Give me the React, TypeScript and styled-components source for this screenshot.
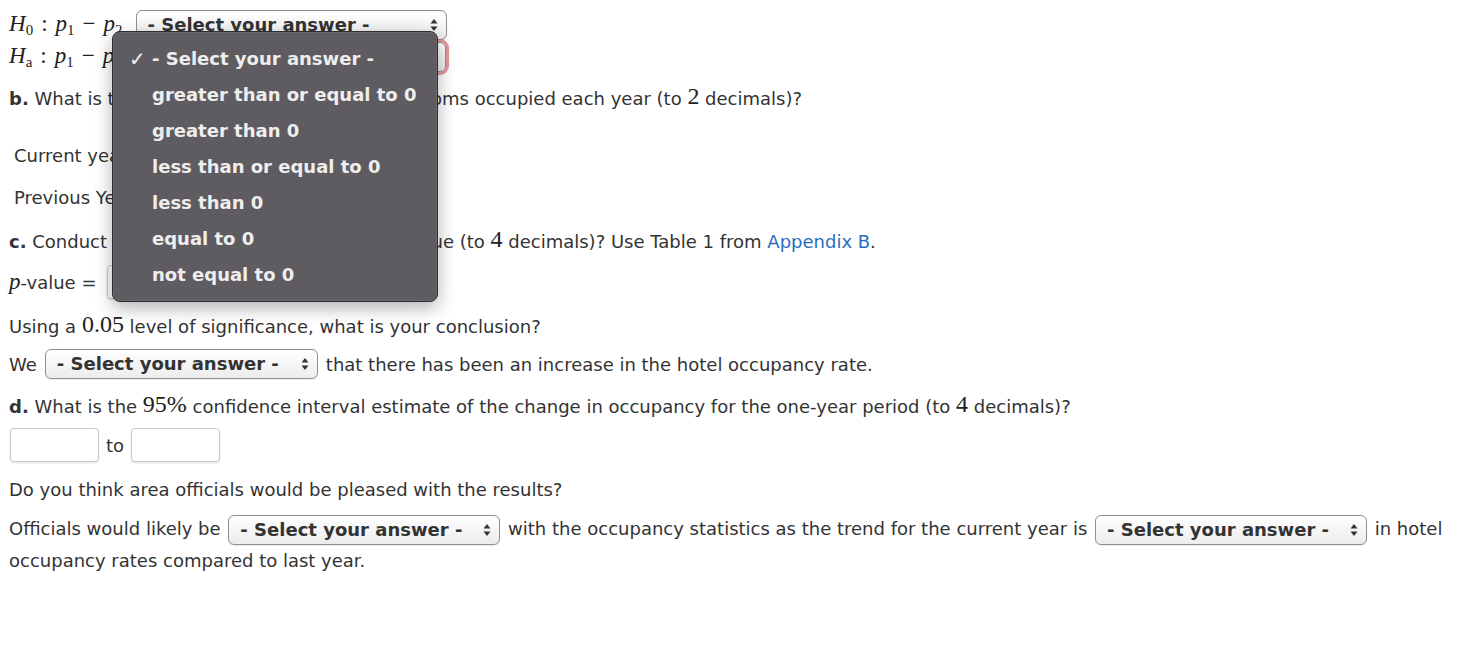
import React from "react";
import styled, { createGlobalStyle } from "styled-components";

const Global = createGlobalStyle`
  body {
    margin: 0;
    background: #ffffff;
    color: #333333;
    font-family: "DejaVu Sans", Verdana, sans-serif;
    font-size: 18px;
  }
`;

const Page = styled.div`
  position: relative;
  padding: 9px 0 0 9px;
  width: 1468px;
  height: 672px;
  box-sizing: border-box;
  overflow: hidden;
`;

const Row = styled.div<{ $h?: number; $mt?: number; $indent?: number; $gap?: number }>`
  display: flex;
  align-items: center;
  gap: ${(p) => p.$gap ?? 6}px;
  height: ${(p) => p.$h ?? 24}px;
  margin-top: ${(p) => p.$mt ?? 0}px;
  padding-left: ${(p) => p.$indent ?? 0}px;
  white-space: nowrap;
`;

const Para = styled.p`
  margin: 12px 0 0 0;
  line-height: 32px;
  width: 1445px;
`;

const MathText = styled.span`
  font-family: "Liberation Serif", "DejaVu Serif", serif;
  font-size: 23px;
  font-style: italic;
  color: #222;
`;

const Op = styled.span`
  font-style: normal;
  padding: 0 8px;
`;

const Sub = styled.sub`
  font-size: 15px;
  font-style: normal;
  vertical-align: -4px;
`;

const Num = styled.span`
  font-family: "Liberation Serif", "DejaVu Serif", serif;
  font-size: 24px;
  line-height: 20px;
  vertical-align: 1px;
  color: #222;
`;

const Bold = styled.b`
  font-weight: 700;
`;

const Link = styled.a`
  color: #2a6ebb;
  text-decoration: none;
`;

const SelectBox = styled.span<{ $w: number; $focus?: boolean }>`
  display: inline-flex;
  align-items: center;
  justify-content: space-between;
  vertical-align: middle;
  box-sizing: border-box;
  width: ${(p) => p.$w}px;
  height: 30px;
  margin: 0 2px;
  padding: 0 8px 0 11px;
  border: 1px solid #8f8f8f;
  border-radius: 6px;
  background: linear-gradient(#ffffff, #ececec);
  font-weight: 700;
  font-size: 18px;
  color: #333;
  line-height: 28px;
  white-space: nowrap;
  box-shadow: ${(p) =>
    p.$focus ? "0 0 0 3px rgba(214, 94, 100, 0.65)" : "0 1px 1px rgba(0,0,0,0.08)"};
`;

const TextInput = styled.span<{ $w?: number }>`
  display: inline-block;
  vertical-align: middle;
  box-sizing: border-box;
  width: ${(p) => p.$w ?? 89}px;
  height: 34px;
  border: 1px solid #c9c9c9;
  border-radius: 4px;
  background: #fff;
  box-shadow: 0 1px 2px rgba(0, 0, 0, 0.12);
`;

const Menu = styled.div`
  position: absolute;
  left: 112px;
  top: 31px;
  width: 326px;
  height: 271px;
  box-sizing: border-box;
  padding-top: 9px;
  background: #5f5c61;
  border: 1px solid #2e2d2f;
  border-radius: 8px;
  box-shadow: 0 6px 18px rgba(0, 0, 0, 0.3), inset 0 0 0 1px rgba(255, 255, 255, 0.08);
`;

const Item = styled.div`
  position: relative;
  height: 36px;
  line-height: 36px;
  padding-left: 39px;
  color: #efeeee;
  font-weight: 700;
  font-size: 18px;
  white-space: nowrap;
`;

const Check = styled.span`
  position: absolute;
  left: 16px;
  top: 0;
  font-weight: 400;
  font-size: 20px;
`;

const Arrows = () => (
  <svg width="8" height="14" viewBox="0 0 8 14">
    <path d="M4 1 L7.5 5.5 H0.5 Z" fill="#333" />
    <path d="M4 13 L7.5 8.5 H0.5 Z" fill="#333" />
  </svg>
);

const Select = ({ w, focus }: { w: number; focus?: boolean }) => (
  <SelectBox $w={w} $focus={focus}>
    <span>- Select your answer -</span>
    <Arrows />
  </SelectBox>
);

const options = [
  "- Select your answer -",
  "greater than or equal to 0",
  "greater than 0",
  "less than or equal to 0",
  "less than 0",
  "equal to 0",
  "not equal to 0",
];

export default function App() {
  return (
    <Page>
      <Global />
      <Row $h={32} $gap={11}>
        <MathText>
          H<Sub>0</Sub>
          <Op>:</Op>p<Sub>1</Sub>
          <Op>−</Op>p<Sub>2</Sub>
        </MathText>
        <Select w={311} />
      </Row>
      <Row $h={32} $gap={11}>
        <MathText>
          H<Sub>a</Sub>
          <Op>:</Op>p<Sub>1</Sub>
          <Op>−</Op>p<Sub>2</Sub>
        </MathText>
        <Select w={311} focus />
      </Row>
      <Row $mt={12}>
        <span>
          <Bold>b.</Bold> What is the estimated proportion of hotel rooms occupied each year (to{" "}
          <Num>2</Num> decimals)?
        </span>
      </Row>
      <Row $h={36} $mt={28} $indent={5}>
        <span>Current year</span>
        <TextInput />
      </Row>
      <Row $h={36} $mt={6} $indent={5}>
        <span>Previous Year</span>
        <TextInput />
      </Row>
      <Row $mt={13}>
        <span>
          <Bold>c.</Bold> Conduct a hypothesis test. What is the p-value (to <Num>4</Num> decimals)?
          Use Table 1 from <Link>Appendix B</Link>.
        </span>
      </Row>
      <Row $h={34} $mt={13} $gap={11}>
        <span>
          <MathText>p</MathText>-value =
        </span>
        <TextInput />
      </Row>
      <Row $mt={14}>
        <span>
          Using a <Num>0.05</Num> level of significance, what is your conclusion?
        </span>
      </Row>
      <Row $h={32} $mt={11}>
        <span>We</span>
        <Select w={273} />
        <span>that there has been an increase in the hotel occupancy rate.</span>
      </Row>
      <Row $mt={13}>
        <span>
          <Bold>d.</Bold> What is the <Num>95%</Num> confidence interval estimate of the change in
          occupancy for the one-year period (to <Num>4</Num> decimals)?
        </span>
      </Row>
      <Row $h={34} $mt={11} $gap={7} $indent={1}>
        <TextInput />
        <span>to</span>
        <TextInput />
      </Row>
      <Row $mt={15}>
        <span>Do you think area officials would be pleased with the results?</span>
      </Row>
      <Para>
        Officials would likely be <Select w={272} /> with the occupancy statistics as the trend
        for the current year is <Select w={272} /> in hotel occupancy rates compared to last year.
      </Para>

      <Menu>
        {options.map((o, i) => (
          <Item key={o}>
            {i === 0 && <Check>✓</Check>}
            {o}
          </Item>
        ))}
      </Menu>
    </Page>
  );
}
